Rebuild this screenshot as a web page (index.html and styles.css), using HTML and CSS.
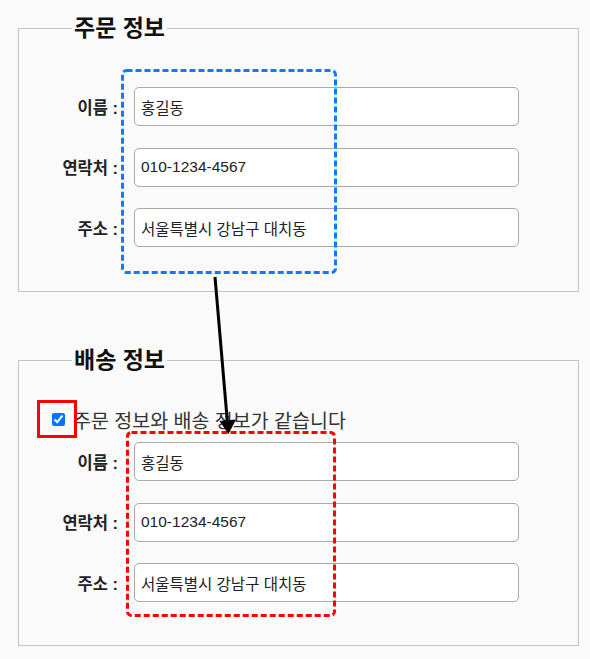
FILE: index.html
```html
<!DOCTYPE html>
<html lang="ko">
<head>
    <meta charset="UTF-8">
    <meta name="viewport" content="width=device-width, initial-scale=1.0">
    <title>주문 / 배송 정보</title>
    <link rel="stylesheet" href="styles.css">
</head>
<body>
    <div class="page">
        <fieldset class="group">
            <legend class="group-title">주문 정보</legend>
            <div class="field">
                <label class="field-label" for="orderName">이름 :</label>
                <input class="field-input" id="orderName" type="text" value="홍길동">
            </div>
            <div class="field">
                <label class="field-label" for="orderPhone">연락처 :</label>
                <input class="field-input" id="orderPhone" type="text" value="010-1234-4567">
            </div>
            <div class="field">
                <label class="field-label" for="orderAddr">주소 :</label>
                <input class="field-input" id="orderAddr" type="text" value="서울특별시 강남구 대치동">
            </div>
        </fieldset>

        <fieldset class="group shipping">
            <legend class="group-title">배송 정보</legend>
            <label class="same-check">
                <input type="checkbox" class="same-box" checked>
                <span>주문 정보와 배송 정보가 같습니다</span>
            </label>
            <div class="field">
                <label class="field-label" for="shipName">이름 :</label>
                <input class="field-input" id="shipName" type="text" value="홍길동">
            </div>
            <div class="field">
                <label class="field-label" for="shipPhone">연락처 :</label>
                <input class="field-input" id="shipPhone" type="text" value="010-1234-4567">
            </div>
            <div class="field">
                <label class="field-label" for="shipAddr">주소 :</label>
                <input class="field-input" id="shipAddr" type="text" value="서울특별시 강남구 대치동">
            </div>
        </fieldset>

        <!-- annotation layer drawn over the form -->
        <svg class="marks" width="590" height="659" viewBox="0 0 590 659">
            <rect x="122.5" y="70.5" width="213" height="202" rx="4" fill="none"
                  stroke="#0a7cff" stroke-width="3" stroke-dasharray="6 3"/>
            <rect x="127.5" y="432.5" width="207" height="183" rx="4" fill="none"
                  stroke="#ff0000" stroke-width="3" stroke-dasharray="6 3"/>
            <rect x="38.5" y="401.5" width="37" height="35" fill="none"
                  stroke="#ff0000" stroke-width="3"/>
            <line x1="215" y1="277" x2="227.3" y2="421" stroke="#000" stroke-width="3"/>
            <polygon points="228.5,434 236,419.5 219.5,421" fill="#000"/>
        </svg>
    </div>
</body>
</html>
```

FILE: styles.css
```css
:root {
    --page-bg: #fafafa;
    --line: #c4c4c4;
    --input-border: #aaaaaa;
    --text: #222222;
}

body {
    margin: 0;
    background: var(--page-bg);
    color: var(--text);
    font-family: "Liberation Sans", "Noto Sans CJK KR", sans-serif;
}

.page {
    position: relative;
    width: 561px;
    min-height: 659px;
    padding: 16px 11px 0 18px;
}

.group {
    margin: 0;
    padding: 47px 0 44px 0;
    border: 1px solid var(--line);
    display: flex;
    flex-direction: column;
    gap: 21.5px;
}

.shipping {
    margin-top: 56px;
    padding-top: 34px;
    padding-bottom: 43px;
}

.group-title {
    margin-left: 53px;
    padding: 0 2px;
    font-size: 23px;
    line-height: 24px;
    font-weight: bold;
    color: #111;
}

.field {
    display: flex;
    align-items: center;
}

.field-label {
    width: 99px;
    margin-right: 16px;
    text-align: right;
    font-size: 16.5px;
    font-weight: bold;
}

.field-input {
    width: 385px;
    height: 39px;
    box-sizing: border-box;
    padding: 0 6px;
    border: 1px solid var(--input-border);
    border-radius: 5px;
    background: #fff;
    color: #222;
    font-family: inherit;
    font-size: 15.5px;
}

.same-check {
    display: flex;
    align-items: center;
    gap: 8px;
    height: 26px;
    margin-bottom: -11.5px;
    padding-left: 33px;
    font-size: 19.5px;
    color: #333;
}

.same-box {
    width: 13px;
    height: 13px;
    margin: 0;
}

.marks {
    position: absolute;
    left: 0;
    top: 0;
    pointer-events: none;
}
```
